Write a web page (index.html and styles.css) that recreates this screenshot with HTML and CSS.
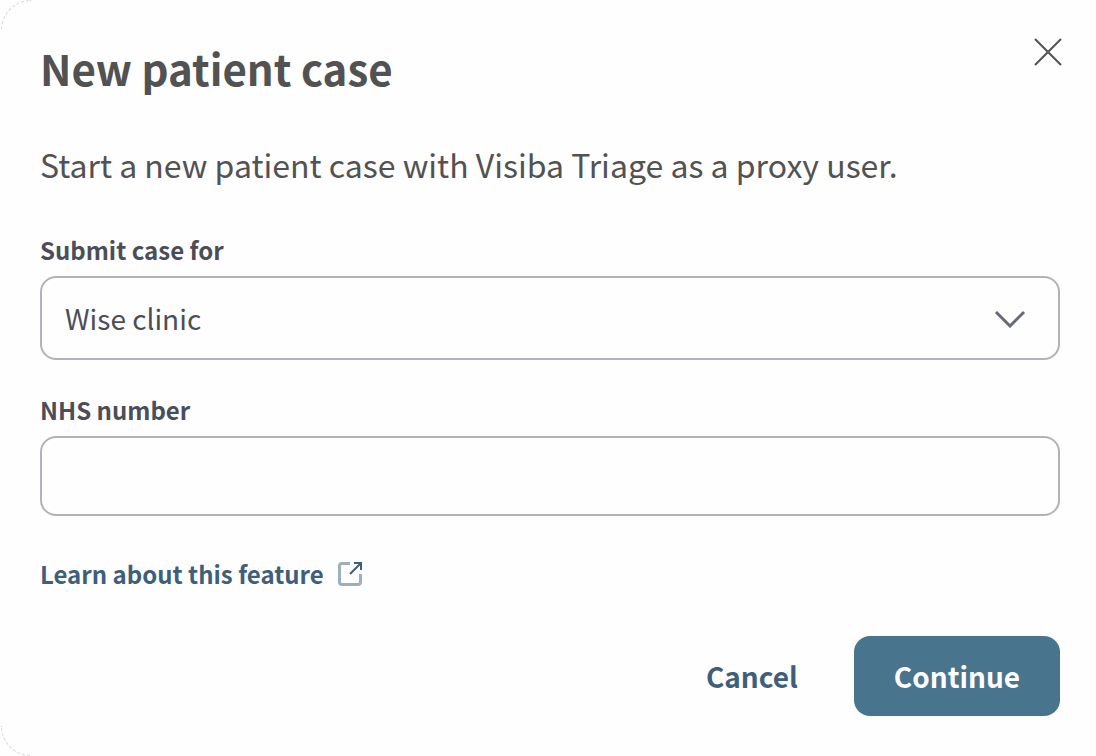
FILE: index.html
```html
<!DOCTYPE html>
<html lang="en">
<head>
<meta charset="utf-8">
<meta name="viewport" content="width=device-width, initial-scale=1">
<title>New patient case</title>
<link rel="stylesheet" href="styles.css">
</head>
<body>
<main class="dialog" role="dialog" aria-labelledby="dialog-title">
  <span class="corner corner-top" aria-hidden="true"></span>
  <span class="corner corner-bottom" aria-hidden="true"></span>
  <header class="dialog-header">
    <h1 class="dialog-title" id="dialog-title">New patient case</h1>
    <button class="close-button" type="button" aria-label="Close">
      <svg class="close-icon" viewBox="0 0 32 32" aria-hidden="true"><path d="M3 3 29 29M29 3 3 29"/></svg>
    </button>
  </header>
  <p class="intro">Start a new patient case with Visiba Triage as a proxy user.</p>
  <form class="case-form">
    <div class="field">
      <label class="field-label" for="clinic">Submit case for</label>
      <div class="select-wrap">
        <select class="control select" id="clinic"><option>Wise clinic</option></select>
        <svg class="chevron" viewBox="0 0 32 20" aria-hidden="true"><path d="M2 4 16 18 30 4"/></svg>
      </div>
    </div>
    <div class="field">
      <label class="field-label" for="nhs">NHS number</label>
      <input class="control input" id="nhs" type="text">
    </div>
    <a class="learn-link" href="#">Learn about this feature
      <svg class="external-icon" viewBox="0 0 24 24" aria-hidden="true"><path class="frame" d="M12 1.500H4Q1.500 1.500 1.500 4V20Q1.500 22.500 4 22.500H20Q22.500 22.500 22.500 20V12"/><path class="arrow" d="M12 12 22 2M16 1H23V8"/></svg>
    </a>
    <div class="actions">
      <button class="button button-text" type="button">Cancel</button>
      <button class="button button-primary" type="submit">Continue</button>
    </div>
  </form>
</main>
</body>
</html>
```
FILE: styles.css
```css
* {
  box-sizing: border-box;
}

body {
  margin: 0;
  background: #fefefe;
  color: #525252;
  font-family: "Noto Sans CJK SC", "Noto Sans", sans-serif;
}

.dialog {
  position: relative;
  min-height: 100vh;
  padding: 36px 36px 40px 40px;
}

.corner {
  position: absolute;
  left: 1px;
  width: 30px;
  height: 30px;
  border: 0 dashed #d4d4d4;
  border-left-width: 1px;
}

.corner-top {
  top: 0;
  border-top-width: 1px;
  border-top-left-radius: 30px;
}

.corner-bottom {
  bottom: 0;
  border-bottom-width: 1px;
  border-bottom-left-radius: 30px;
}

.dialog-header {
  display: flex;
  justify-content: space-between;
  align-items: flex-start;
}

.dialog-title {
  margin: 0;
  font-size: 42px;
  line-height: 64px;
  font-weight: 700;
}

.close-button {
  display: flex;
  margin-right: -4px;
  padding: 0;
  border: 0;
  background: none;
}

.close-icon {
  width: 32px;
  height: 32px;
  fill: none;
  stroke: #525252;
  stroke-width: 2;
}

.intro {
  margin: 40px 0 44px;
  font-size: 32px;
  line-height: 48px;
}

.case-form {
  display: flex;
  flex-direction: column;
  gap: 32px;
}

.field {
  display: flex;
  flex-direction: column;
  gap: 8px;
}

.field-label {
  color: #4b4e59;
  font-size: 24px;
  line-height: 36px;
  font-weight: 700;
}

.select-wrap {
  display: grid;
  align-items: center;
}

.control {
  width: 100%;
  padding: 0 23px;
  border: 2px solid #b0b3ba;
  border-radius: 16px;
  background: #fefefe;
  color: #4b4e59;
  font: inherit;
  font-size: 28px;
}

.select {
  grid-area: 1 / 1;
  height: 84px;
  appearance: none;
}

.input {
  height: 80px;
}

.chevron {
  grid-area: 1 / 1;
  justify-self: end;
  width: 32px;
  height: 20px;
  margin-right: 34px;
  fill: none;
  stroke: #676b78;
  stroke-width: 3;
  pointer-events: none;
}

.learn-link {
  display: flex;
  align-items: center;
  align-self: flex-start;
  gap: 14px;
  margin-top: 8px;
  color: #3e5f7b;
  font-size: 24px;
  line-height: 36px;
  font-weight: 700;
  text-decoration: none;
}

.external-icon {
  width: 24px;
  height: 24px;
  fill: none;
  stroke-width: 2;
}

.frame {
  stroke: #9dafbe;
  stroke-width: 3;
}

.arrow {
  stroke: #3e5f7b;
}

.actions {
  display: flex;
  justify-content: flex-end;
  gap: 16px;
  margin-top: 12px;
}

.button {
  height: 80px;
  padding: 0 40px;
  border: 0;
  border-radius: 16px;
  font: inherit;
  font-size: 28px;
  font-weight: 700;
}

.button-text {
  background: none;
  color: #3e5f7b;
}

.button-primary {
  background: #49748d;
  color: #fefefe;
}
```
